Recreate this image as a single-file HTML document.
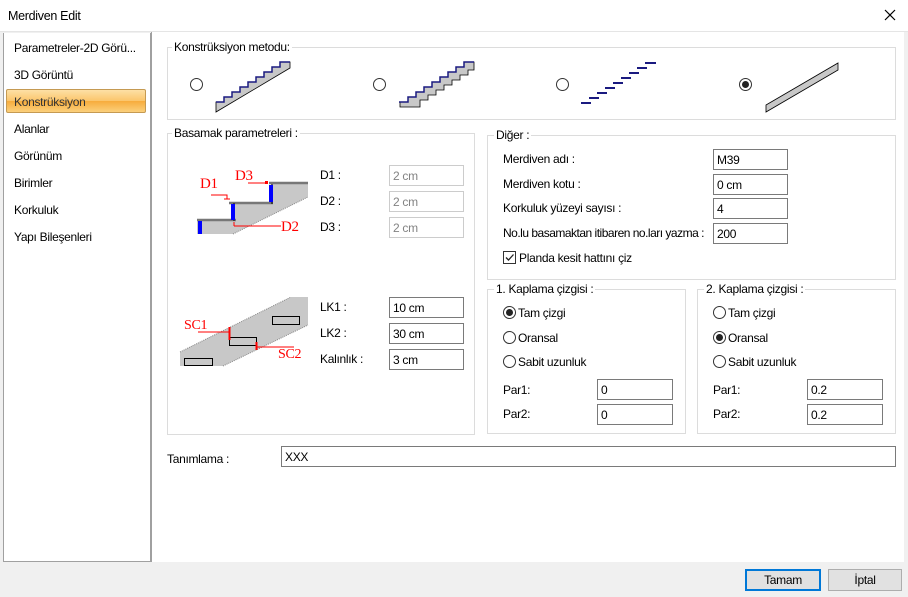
<!DOCTYPE html>
<html><head><meta charset="utf-8"><style>
*{box-sizing:border-box;margin:0;padding:0}
body{width:908px;height:597px;background:#f0f0f0;font-family:"Liberation Sans",sans-serif;font-size:12px;color:#000;position:relative;overflow:hidden;letter-spacing:-0.3px}
.a{position:absolute}
.t{position:absolute;white-space:nowrap;line-height:14px}
.g{position:absolute;border:1px solid #dcdcdc}
.gl{position:absolute;background:#fff;padding:0 2px;line-height:14px;white-space:nowrap}
.in{position:absolute;border:1px solid #7a7a7a;background:#fff;padding:3px 0 0 3px;line-height:14px;height:21px}
.dis{border-color:#ccc;color:#838383;background:#fff}
.r{position:absolute;width:13px;height:13px;border:1px solid #333;border-radius:50%;background:#fff}
.r.on::after{content:"";position:absolute;left:2px;top:2px;width:7px;height:7px;border-radius:50%;background:#222}
</style></head><body>
<div class="a" style="left:0;top:0;width:908px;height:31px;background:#fff"></div>
<div class="t" style="left:8px;top:9px;font-size:12.5px">Merdiven Edit</div>
<svg class="a" style="left:884px;top:9px" width="12" height="12"><path d="M1 1L11 11M11 1L1 11" stroke="#000" stroke-width="1.2"/></svg>
<div class="a" style="left:0;top:31px;width:908px;height:1px;background:#e5e5e5"></div>

<div class="a" style="left:3px;top:33px;width:148px;height:529px;background:#fff;border:1px solid #a0a0a0;border-top:none"></div>
<div class="t" style="left:14px;top:41px">Parametreler-2D Görü...</div>
<div class="t" style="left:14px;top:68px">3D Görüntü</div>
<div class="a" style="left:6px;top:89px;width:140px;height:24px;border:1px solid #c59a52;border-radius:2px;background:linear-gradient(#fde0a6,#fbc56b 50%,#f7ac3c 51%,#fbd07c)"></div>
<div class="t" style="left:14px;top:95px;color:#333">Konstrüksiyon</div>
<div class="t" style="left:14px;top:122px">Alanlar</div>
<div class="t" style="left:14px;top:149px">Görünüm</div>
<div class="t" style="left:14px;top:176px">Birimler</div>
<div class="t" style="left:14px;top:203px">Korkuluk</div>
<div class="t" style="left:14px;top:230px">Yapı Bileşenleri</div>

<div class="a" style="left:151px;top:32px;width:753px;height:530px;background:#fff;border-left:1px solid #a0a0a0"></div>

<div class="g" style="left:167px;top:47px;width:729px;height:73px"></div>
<div class="gl" style="left:172px;top:40px">Konstrüksiyon metodu:</div>
<div class="r" style="left:190px;top:78px"></div>
<div class="r" style="left:373px;top:78px"></div>
<div class="r" style="left:556px;top:78px"></div>
<div class="r on" style="left:739px;top:78px"></div>

<div class="g" style="left:167px;top:133px;width:308px;height:302px"></div>
<div class="gl" style="left:172px;top:126px">Basamak parametreleri :</div>
<div class="t" style="left:320px;top:168px">D1 :</div>
<div class="t" style="left:320px;top:194px">D2 :</div>
<div class="t" style="left:320px;top:220px">D3 :</div>
<div class="in dis" style="left:389px;top:165px;width:75px">2 cm</div>
<div class="in dis" style="left:389px;top:191px;width:75px">2 cm</div>
<div class="in dis" style="left:389px;top:217px;width:75px">2 cm</div>
<div class="t" style="left:320px;top:300px">LK1 :</div>
<div class="t" style="left:320px;top:326px">LK2 :</div>
<div class="t" style="left:320px;top:352px">Kalınlık :</div>
<div class="in" style="left:389px;top:297px;width:75px">10 cm</div>
<div class="in" style="left:389px;top:323px;width:75px">30 cm</div>
<div class="in" style="left:389px;top:349px;width:75px">3 cm</div>

<div class="g" style="left:487px;top:135px;width:409px;height:145px"></div>
<div class="gl" style="left:494px;top:128px">Diğer :</div>
<div class="t" style="left:503px;top:152px">Merdiven adı :</div>
<div class="t" style="left:503px;top:177px">Merdiven kotu :</div>
<div class="t" style="left:503px;top:201px">Korkuluk yüzeyi sayısı :</div>
<div class="t" style="left:503px;top:226px;letter-spacing:-0.5px">No.lu basamaktan itibaren no.ları yazma :</div>
<div class="in" style="left:713px;top:149px;width:75px">M39</div>
<div class="in" style="left:713px;top:174px;width:75px">0 cm</div>
<div class="in" style="left:713px;top:198px;width:75px">4</div>
<div class="in" style="left:713px;top:223px;width:75px">200</div>
<div class="a" style="left:503px;top:251px;width:13px;height:13px;border:1px solid #333;background:#fff"></div>
<svg class="a" style="left:504px;top:252px" width="11" height="11"><path d="M2 5.5L4.5 8L9.5 2.5" stroke="#222" fill="none" stroke-width="1.3"/></svg>
<div class="t" style="left:519px;top:251px">Planda kesit hattını çiz</div>

<div class="g" style="left:487px;top:289px;width:199px;height:145px"></div>
<div class="gl" style="left:494px;top:282px">1. Kaplama çizgisi :</div>
<div class="r on" style="left:503px;top:306px"></div><div class="t" style="left:518px;top:306px">Tam çizgi</div>
<div class="r" style="left:503px;top:331px"></div><div class="t" style="left:518px;top:331px">Oransal</div>
<div class="r" style="left:503px;top:355px"></div><div class="t" style="left:518px;top:355px">Sabit uzunluk</div>
<div class="t" style="left:503px;top:383px">Par1:</div>
<div class="t" style="left:503px;top:407px">Par2:</div>
<div class="in" style="left:597px;top:379px;width:76px">0</div>
<div class="in" style="left:597px;top:404px;width:76px">0</div>

<div class="g" style="left:697px;top:289px;width:199px;height:145px"></div>
<div class="gl" style="left:704px;top:282px">2. Kaplama çizgisi :</div>
<div class="r" style="left:713px;top:306px"></div><div class="t" style="left:728px;top:306px">Tam çizgi</div>
<div class="r on" style="left:713px;top:331px"></div><div class="t" style="left:728px;top:331px">Oransal</div>
<div class="r" style="left:713px;top:355px"></div><div class="t" style="left:728px;top:355px">Sabit uzunluk</div>
<div class="t" style="left:713px;top:383px">Par1:</div>
<div class="t" style="left:713px;top:407px">Par2:</div>
<div class="in" style="left:807px;top:379px;width:76px">0.2</div>
<div class="in" style="left:807px;top:404px;width:76px">0.2</div>

<svg class="a" style="left:0;top:0" width="908" height="597">
<!-- icon 1 -->
<path d="M216 112V102H224V97H232V92H240V87H248V82H256V77H264V72H272V67H280V62H290V68Z" fill="#c8c8c8" stroke="#000" stroke-width=".8"/>
<path d="M216 102H224V97H232V92H240V87H248V82H256V77H264V72H272V67H280V62H290" fill="none" stroke="#1a1a80" stroke-width="1.5"/>
<!-- icon 2 -->
<path d="M400 107V102H408V97H416V92H424V87H432V82H440V77H448V72H456V67H464V62H474V70H468V75H460V80H452V85H444V90H436V95H428V100H420V107Z" fill="#c8c8c8" stroke="#000" stroke-width=".8"/>
<path d="M399 102H408V97H416V92H424V87H432V82H440V77H448V72H456V67H464V62H474" fill="none" stroke="#1a1a80" stroke-width="1.5"/>
<!-- icon 3 -->
<path d="M581 103h10M589 98h10M597 93h10M605 88h10M613 83h10M621 78h10M629 73h10M637 68h10M645 63h11" stroke="#1a1a80" stroke-width="2"/>
<!-- icon 4 -->
<path d="M766 112V105L838 63V70Z" fill="#c8c8c8" stroke="#000" stroke-width=".8"/>
<!-- basamak drawing -->
<path d="M197 234V220H233V203H271V183H308V197L233 234Z" fill="#c8c8c8"/>
<path d="M233 234L308 197" stroke="#888" stroke-dasharray="1 1"/>
<path d="M197 220H236M229 203H273M269 183H308" stroke="#777" stroke-width="2.5"/>
<path d="M234 221V203M272 204V184" stroke="#000" stroke-width="1"/>
<path d="M200 221V234M233 204V220M271 185V202" stroke="#00f" stroke-width="4"/>
<text x="200" y="188" fill="#f00" font-family="Liberation Serif" font-size="15">D1</text>
<text x="235" y="180" fill="#f00" font-family="Liberation Serif" font-size="15">D3</text>
<text x="281" y="231" fill="#f00" font-family="Liberation Serif" font-size="15">D2</text>
<path d="M211 195H227V199M224 199H230M248 183H266M234 226H281M234 222V226" stroke="#f00" fill="none"/>
<rect x="265" y="181" width="3" height="3" fill="#f00"/>
<path d="M180 352L291 297H308V325L223 366H180Z" fill="#c8c8c8"/>
<path d="M180 352L291 297M223 366L308 325" stroke="#888" stroke-dasharray="1 1"/>
<rect x="272.5" y="316.5" width="27" height="8" fill="none" stroke="#000"/>
<rect x="229.5" y="337.5" width="27" height="8" fill="none" stroke="#000"/>
<rect x="184.5" y="358.5" width="28" height="7" fill="none" stroke="#000"/>
<path d="M198 332H229M294 347H256" stroke="#f00" fill="none"/>
<path d="M229.5 327V340M256.5 342V350" stroke="#f00" stroke-width="2"/>
<text x="184" y="329" fill="#f00" font-family="Liberation Serif" font-size="14">SC1</text>
<text x="278" y="358" fill="#f00" font-family="Liberation Serif" font-size="14">SC2</text>
</svg>

<div class="t" style="left:167px;top:452px">Tanımlama :</div>
<div class="in" style="left:281px;top:446px;width:615px">XXX</div>

<div class="a" style="left:745px;top:569px;width:76px;height:22px;border:2px solid #0078d7;background:#e1e1e1;text-align:center;line-height:18px">Tamam</div>
<div class="a" style="left:828px;top:569px;width:74px;height:22px;border:1px solid #adadad;background:#e1e1e1;text-align:center;line-height:20px">İptal</div>
</body></html>
